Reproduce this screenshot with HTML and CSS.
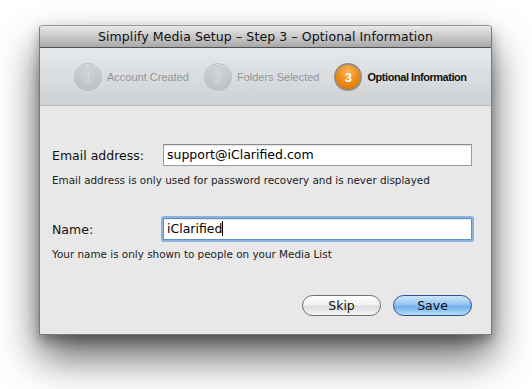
FILE: index.html
```html
<!DOCTYPE html>
<html>
<head>
<meta charset="utf-8">
<link rel="stylesheet" href="styles.css">
</head>
<body>
<div class="window">
  <div class="titlebar">Simplify Media Setup – Step 3 – Optional Information</div>
  <div class="steps">
    <div class="step done"><span class="circle">1</span><span class="step-label">Account Created</span></div>
    <div class="step done"><span class="circle">2</span><span class="step-label">Folders Selected</span></div>
    <div class="step active"><span class="circle">3</span><span class="step-label">Optional Information</span></div>
  </div>
  <div class="content">
    <div class="field">
      <div class="row">
        <label class="label">Email address:</label>
        <div class="input">support@iClarified.com</div>
      </div>
      <div class="hint">Email address is only used for password recovery and is never displayed</div>
    </div>
    <div class="field second">
      <div class="row">
        <label class="label">Name:</label>
        <div class="input focused">iClarified<span class="caret"></span></div>
      </div>
      <div class="hint">Your name is only shown to people on your Media List</div>
    </div>
    <div class="buttons">
      <button class="btn">Skip</button>
      <button class="btn default">Save</button>
    </div>
  </div>
</div>
</body>
</html>
```
FILE: styles.css
```css
html, body {
  margin: 0;
  background: #ffffff;
  height: 100%;
}
body {
  box-sizing: border-box;
  padding: 25px 0 0 39px;
  font-family: "DejaVu Sans", sans-serif;
}
.window {
  width: 453px;
  height: 310px;
  box-sizing: border-box;
  border: 1px solid #7a7a7a;
  border-top-color: #9a9a9a;
  border-radius: 4px 4px 0 0;
  background: #e8e8e8;
  display: flex;
  flex-direction: column;
  box-shadow: 0 22px 40px rgba(0, 0, 0, 0.62), 0 6px 12px rgba(0,0,0,0.3);
  overflow: hidden;
}
.titlebar {
  height: 21px;
  flex: none;
  background: linear-gradient(#e9e9e9, #c9c9c9 50%, #a9a9a9);
  border-bottom: 1px solid #4f4f4f;
  text-align: center;
  font-size: 12.5px;
  line-height: 22px;
  color: #111;
  letter-spacing: 0.1px;
}
.steps {
  height: 58px;
  flex: none;
  box-sizing: border-box;
  background: linear-gradient(#e6e9eb, #cdd1d3);
  border-bottom: 1px solid #b9bcbe;
  display: flex;
  align-items: center;
  padding-left: 34px;
  padding-top: 1px;
  gap: 15px;
  font-family: "Liberation Sans", Arial, sans-serif;
  font-size: 11px;
}
.step {
  display: flex;
  align-items: center;
  gap: 5px;
}
.circle {
  width: 28px;
  height: 28px;
  box-sizing: border-box;
  border-radius: 50%;
  display: flex;
  align-items: center;
  justify-content: center;
  font-size: 13px;
}
.done .circle {
  background: radial-gradient(circle at 50% 30%, #d2d5d7, #c1c4c6 70%);
  border: 1px solid #bcbfc1;
  color: #d9dbdd;
  box-shadow: inset 0 1px 1px rgba(255,255,255,0.5);
}
.done .step-label {
  color: #939597;
}
.active .circle {
  background: radial-gradient(circle at 50% 25%, #fbb457, #ef8a12 55%, #d46e00);
  border: 2px solid #9a8e83;
  color: #ffffff;
  font-weight: bold;
}
.active .step-label {
  color: #111;
  font-weight: bold;
  letter-spacing: -0.45px;
}
.content {
  flex: 1;
  display: flex;
  flex-direction: column;
  padding: 38px 19px 0 12px;
}
.row {
  display: flex;
  align-items: center;
}
.label {
  width: 111px;
  flex: none;
  font-size: 12.5px;
  color: #111;
}
.input {
  flex: 1;
  height: 22px;
  box-sizing: border-box;
  background: #fff;
  border: 1px solid #9b9b9b;
  border-top-color: #8a8a8a;
  box-shadow: inset 0 1px 1px rgba(0,0,0,0.12);
  font-size: 12.5px;
  line-height: 20px;
  padding-left: 3px;
  color: #000;
}
.input.focused {
  border: 1px solid #5f8fc5;
  box-shadow: 0 0 0 2px #8cb3e0, inset 0 1px 1px rgba(0,0,0,0.1);
  border-radius: 1px;
}
.caret {
  display: inline-block;
  width: 1px;
  height: 15px;
  background: #000;
  vertical-align: -3px;
}
.hint {
  margin-top: 8px;
  font-size: 10.4px;
  color: #222;
}
.second {
  margin-top: 32px;
}
.buttons {
  display: flex;
  justify-content: flex-end;
  gap: 12px;
  margin-top: 35px;
}
.btn {
  width: 79px;
  height: 21px;
  border-radius: 11px;
  border: 1px solid #6e6e6e;
  background: linear-gradient(#ffffff, #f2f2f2 45%, #dcdcdc 55%, #f6f6f6);
  font-family: "DejaVu Sans", sans-serif;
  font-size: 12.5px;
  color: #111;
  padding: 0;
  line-height: 19px;
}
.btn.default {
  border-color: #2d4f8e;
  background: linear-gradient(#cfe6fb, #94c5f2 45%, #6eb0ee 55%, #b7ddfb);
}
```
